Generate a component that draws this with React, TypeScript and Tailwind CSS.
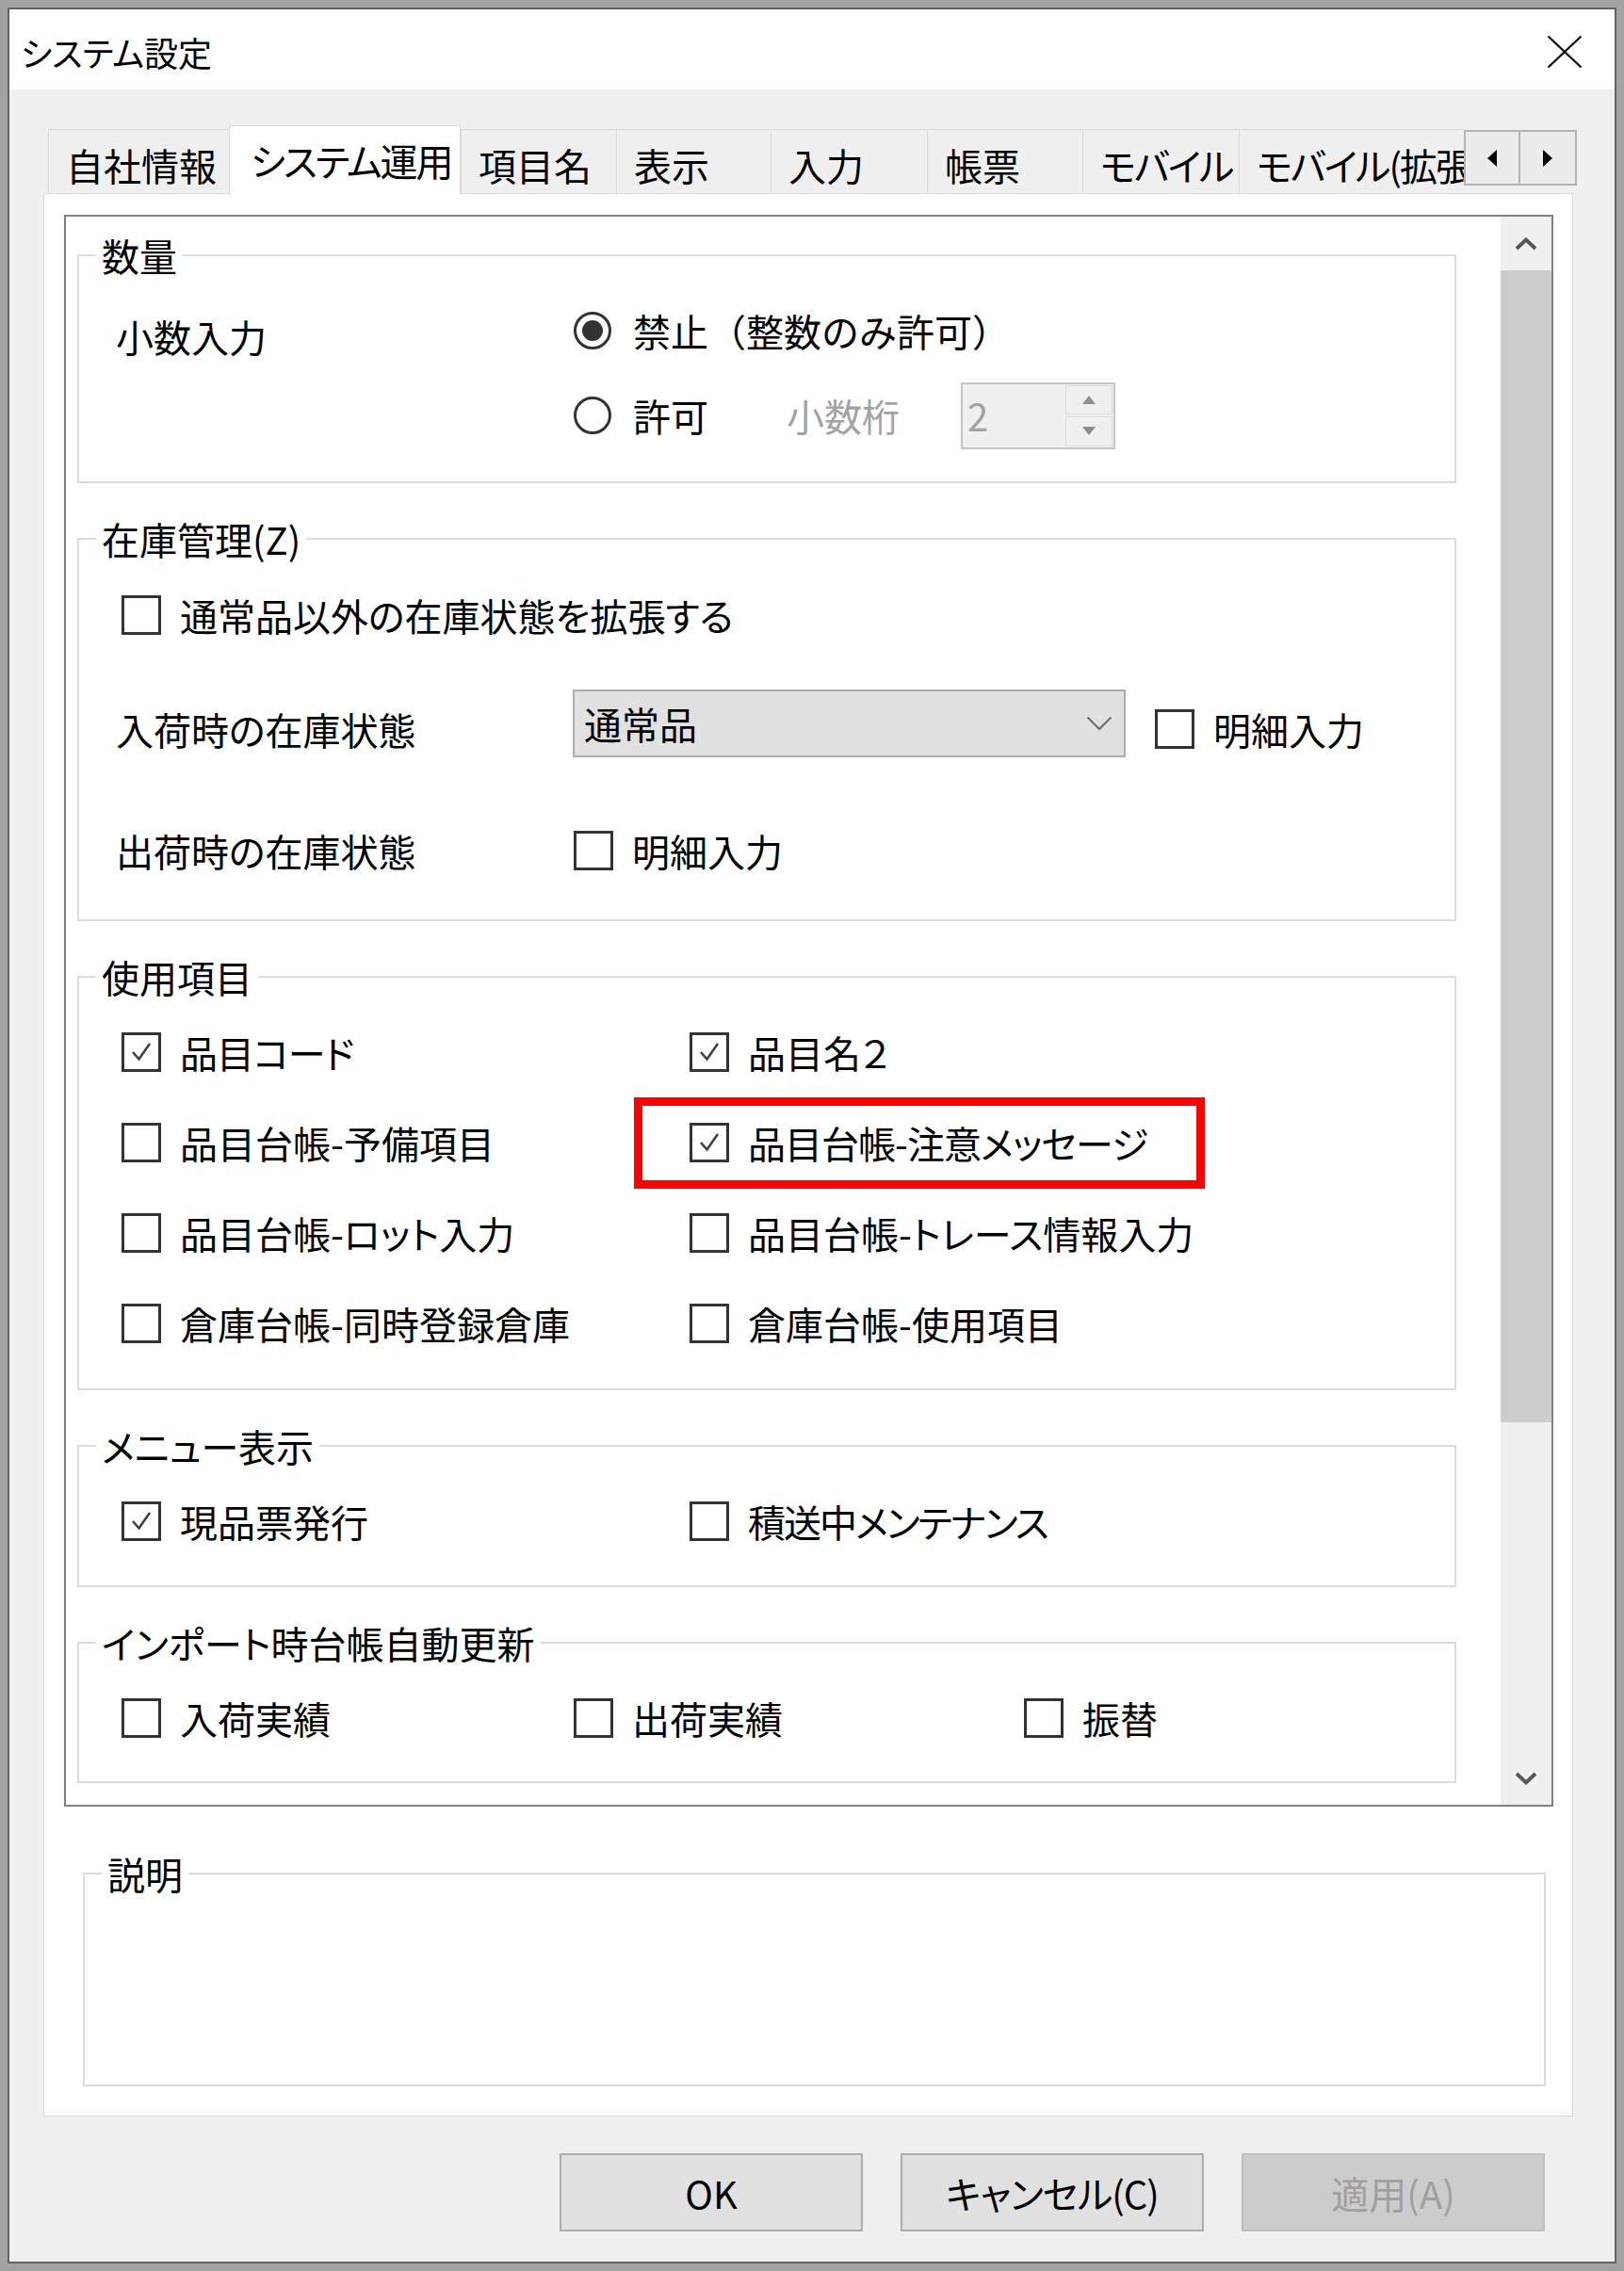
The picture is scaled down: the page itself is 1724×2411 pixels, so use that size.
import React from 'react';
import clsx from 'clsx';

/**
 * System settings dialog (システム設定) – "システム運用" tab.
 * Windows-style dialog: title bar, tab strip, scrolling settings panel,
 * description box and the OK / Cancel / Apply buttons.
 */

const TABS = [
  { label: '自社情報', w: 'w-[192px]' },
  { label: 'システム運用', w: 'w-[246px]', active: true },
  { label: '項目名', w: 'w-[165px]' },
  { label: '表示', w: 'w-[164px]' },
  { label: '入力', w: 'w-[166px]' },
  { label: '帳票', w: 'w-[165px]' },
  { label: 'モバイル', w: 'w-[166px]', tight: true },
  { label: 'モバイル(拡張)', w: 'w-[239px]', tight: true },
];

function CheckBox({ checked = false }: { checked?: boolean }) {
  return (
    <span className="flex h-[42px] w-[42px] shrink-0 items-center justify-center border-[3px] border-[#333333] bg-white">
      {checked && (
        <svg width="30" height="30" viewBox="0 0 30 30" fill="none">
          <path d="M6 15 L12.5 22.5 L24 6" stroke="#404040" strokeWidth="2.6" />
        </svg>
      )}
    </span>
  );
}

function CheckItem({
  label,
  checked,
  className,
  labelClassName,
}: {
  label: string;
  checked?: boolean;
  className?: string;
  labelClassName?: string;
}) {
  return (
    <div className={clsx('flex h-[60px] items-center gap-[20px]', className)}>
      <CheckBox checked={checked} />
      <span className={clsx('whitespace-nowrap text-[40px] leading-none', labelClassName)}>{label}</span>
    </div>
  );
}

function Radio({ selected = false }: { selected?: boolean }) {
  return (
    <span className="flex h-[40px] w-[40px] shrink-0 items-center justify-center rounded-full border-[3px] border-[#333333] bg-white">
      {selected && <span className="h-[22px] w-[22px] rounded-full bg-[#333333]" />}
    </span>
  );
}

function GroupBox({
  title,
  className,
  bodyClassName,
  children,
}: {
  title: string;
  className?: string;
  bodyClassName?: string;
  children?: React.ReactNode;
}) {
  return (
    <fieldset className={clsx('border-2 border-[#dcdcdc]', className)}>
      <legend className="ml-[18px] px-[6px] text-[40px] leading-[48px]">{title}</legend>
      <div className={bodyClassName}>{children}</div>
    </fieldset>
  );
}

function Chevron({ up }: { up?: boolean }) {
  return (
    <svg width="24" height="14" viewBox="0 0 24 14" fill="none">
      <path
        d={up ? 'M2 12 L12 2.5 L22 12' : 'M2 2 L12 11.5 L22 2'}
        stroke="#555555"
        strokeWidth="3.8"
      />
    </svg>
  );
}

export default function App() {
  return (
    <div className="h-[2411px] w-[1724px] bg-[#a3a3a3] p-[8px] font-['Noto_Sans_CJK_JP',sans-serif] text-black [font-feature-settings:'palt']">
      <div className="flex h-full flex-col border-2 border-[#646464] bg-[#f0f0f0]">
        {/* Title bar */}
        <div className="flex h-[85px] shrink-0 items-center justify-between bg-white pl-[12px] pr-[34px] pt-[4px]">
          <span className="text-[36px] leading-none">システム設定</span>
          <svg width="38" height="36" viewBox="0 0 38 36" fill="none">
            <path d="M1.5 1.5 L36.5 34.5 M36.5 1.5 L1.5 34.5" stroke="#111111" strokeWidth="2.4" />
          </svg>
        </div>

        <div className="flex flex-1 flex-col pl-[36px] pr-[44px]">
          {/* Tab strip */}
          <div className="mt-[38px] flex h-[72px] items-end pl-[5px]">
            {TABS.map((t) =>
              t.active ? (
                <div
                  key={t.label}
                  className={clsx(
                    'relative z-10 -mb-px flex h-[73px] shrink-0 items-center whitespace-nowrap border-x border-t border-[#d9d9d9] bg-white pl-[22px] text-[40px] leading-none tracking-[-2px]',
                    t.w,
                  )}
                >
                  {t.label}
                </div>
              ) : (
                <div
                  key={t.label}
                  className={clsx(
                    'flex h-[68px] shrink-0 items-center overflow-hidden whitespace-nowrap border-l border-t border-[#d9d9d9] pl-[18px] pt-[6px] text-[40px] leading-none',
                    t.tight && 'tracking-[-2px]',
                    t.w,
                  )}
                >
                  {t.label}
                </div>
              ),
            )}
            <div className="mb-[8px] flex self-end">
              <div className="flex h-[59px] w-[60px] items-center justify-center border-2 border-[#b4b4b4] bg-[#ececec]">
                <svg width="12" height="20" viewBox="0 0 12 20">
                  <polygon points="11,1 1,10 11,19" fill="#000" />
                </svg>
              </div>
              <div className="flex h-[59px] w-[60px] items-center justify-center border-2 border-l-0 border-[#b4b4b4] bg-[#ececec]">
                <svg width="12" height="20" viewBox="0 0 12 20">
                  <polygon points="1,1 11,10 1,19" fill="#000" />
                </svg>
              </div>
            </div>
          </div>

          {/* Tab panel */}
          <div className="flex h-[2042px] shrink-0 flex-col border border-[#d9d9d9] bg-white pl-[21px] pr-[20px] pt-[22px]">
            {/* Scrolling settings box */}
            <div className="flex h-[1690px] shrink-0 border-2 border-[#828282]">
              <div className="flex flex-1 flex-col gap-[35px] overflow-hidden pl-[12px] pr-[47px] pt-[17px]">
                {/* 数量 */}
                <GroupBox title="数量" bodyClassName="pb-[40px] pl-[39px] pt-[26px]">
                  <div className="flex h-[60px] items-center">
                    <span className="w-[486px] pt-[12px] text-[40px] leading-none">小数入力</span>
                    <Radio selected />
                    <span className="ml-[23px] text-[40px] leading-none [font-feature-settings:normal]">
                      禁止（整数のみ許可）
                    </span>
                  </div>
                  <div className="mt-[30px] flex h-[60px] items-center">
                    <span className="w-[486px]" />
                    <Radio />
                    <span className="ml-[23px] w-[163px] text-[40px] leading-none">許可</span>
                    <span className="w-[185px] text-[40px] leading-none text-[#a3a3a3]">小数桁</span>
                    <div className="flex h-[71px] w-[164px] border-2 border-[#c6c6c6] bg-[#f0f0f0]">
                      <span className="flex flex-1 items-center pl-[5px] text-[40px] leading-none text-[#a3a3a3]">
                        2
                      </span>
                      <div className="my-[1px] mr-[1px] flex w-[50px] flex-col gap-[2px]">
                        <span className="flex flex-1 items-center justify-center border border-[#dddddd] bg-[#f0f0f0]">
                          <svg width="14" height="9" viewBox="0 0 14 9">
                            <polygon points="7,0 14,9 0,9" fill="#8f8f8f" />
                          </svg>
                        </span>
                        <span className="flex flex-1 items-center justify-center border border-[#dddddd] bg-[#f0f0f0]">
                          <svg width="14" height="9" viewBox="0 0 14 9">
                            <polygon points="0,0 14,0 7,9" fill="#8f8f8f" />
                          </svg>
                        </span>
                      </div>
                    </div>
                  </div>
                </GroupBox>

                {/* 在庫管理 */}
                <GroupBox title="在庫管理(Z)" bodyClassName="pb-[43px] pl-[39px] pt-[27px]">
                  <CheckItem label="通常品以外の在庫状態を拡張する" className="ml-[6px]" />
                  <div className="mt-[49px] flex h-[72px] items-center">
                    <span className="w-[485px] pt-[12px] text-[40px] leading-none">入荷時の在庫状態</span>
                    <div className="flex h-[72px] w-[587px] items-center justify-between border-2 border-[#adadad] bg-[#e1e1e1] pl-[10px] pr-[12px]">
                      <span className="text-[40px] leading-none">通常品</span>
                      <svg width="28" height="16" viewBox="0 0 28 16" fill="none">
                        <path d="M1.5 1.5 L14 14 L26.5 1.5" stroke="#6a6a6a" strokeWidth="2" />
                      </svg>
                    </div>
                    <CheckItem label="明細入力" className="ml-[31px] pt-[12px]" />
                  </div>
                  <div className="mt-[69px] flex h-[60px] items-center">
                    <span className="w-[486px] text-[40px] leading-none">出荷時の在庫状態</span>
                    <CheckItem label="明細入力" />
                  </div>
                </GroupBox>

                {/* 使用項目 */}
                <GroupBox title="使用項目" bodyClassName="pb-[39px] pl-[45px] pt-[26px]">
                  <div className="grid grid-cols-[603px_1fr] gap-y-[36px]">
                    <CheckItem label="品目コード" checked labelClassName="tracking-[-1px]" />
                    <CheckItem label="品目名２" checked />
                    <CheckItem label="品目台帳-予備項目" />
                    <div className="relative">
                      <CheckItem label="品目台帳-注意メッセージ" checked labelClassName="tracking-[-1px]" />
                      <div className="absolute left-[-59px] top-[-18px] h-[97px] w-[606px] border-[9px] border-[#ff0000]" />
                    </div>
                    <CheckItem label="品目台帳-ロット入力" />
                    <CheckItem label="品目台帳-トレース情報入力" />
                    <CheckItem label="倉庫台帳-同時登録倉庫" />
                    <CheckItem label="倉庫台帳-使用項目" />
                  </div>
                </GroupBox>

                {/* メニュー表示 */}
                <GroupBox title="メニュー表示" bodyClassName="pb-[38px] pl-[45px] pt-[26px]">
                  <div className="grid grid-cols-[603px_1fr]">
                    <CheckItem label="現品票発行" checked />
                    <CheckItem label="積送中メンテナンス" labelClassName="tracking-[-2px]" />
                  </div>
                </GroupBox>

                {/* インポート時台帳自動更新 */}
                <GroupBox
                  title="インポート時台帳自動更新"
                  className="shrink-0"
                  bodyClassName="pb-[37px] pl-[45px] pt-[26px]"
                >
                  <div className="grid grid-cols-[480px_478px_1fr]">
                    <CheckItem label="入荷実績" />
                    <CheckItem label="出荷実績" />
                    <CheckItem label="振替" />
                  </div>
                </GroupBox>
              </div>

              {/* Vertical scrollbar */}
              <div className="flex w-[54px] shrink-0 flex-col bg-[#f0f0f0]">
                <div className="flex h-[57px] items-center justify-center">
                  <Chevron up />
                </div>
                <div className="h-[1223px] bg-[#cdcdcd]" />
                <div className="flex-1" />
                <div className="flex h-[56px] items-center justify-center">
                  <Chevron />
                </div>
              </div>
            </div>

            {/* 説明 */}
            <GroupBox title="説明" className="ml-[20px] mr-[8px] mt-[47px] h-[250px] shrink-0" />
          </div>

          {/* Dialog buttons */}
          <div className="mt-[39px] flex justify-end gap-[40px] pr-[30px]">
            <button className="flex h-[83px] w-[322px] items-center justify-center border-2 border-[#adadad] bg-[#e1e1e1] text-[40px] leading-none">
              OK
            </button>
            <button className="flex h-[83px] w-[322px] items-center justify-center border-2 border-[#adadad] bg-[#e1e1e1] text-[40px] leading-none tracking-[-1px]">
              キャンセル(C)
            </button>
            <button
              disabled
              className="flex h-[83px] w-[322px] items-center justify-center border-2 border-[#bfbfbf] bg-[#cccccc] text-[40px] leading-none text-[#a0a0a0]"
            >
              適用(A)
            </button>
          </div>
        </div>
      </div>
    </div>
  );
}
